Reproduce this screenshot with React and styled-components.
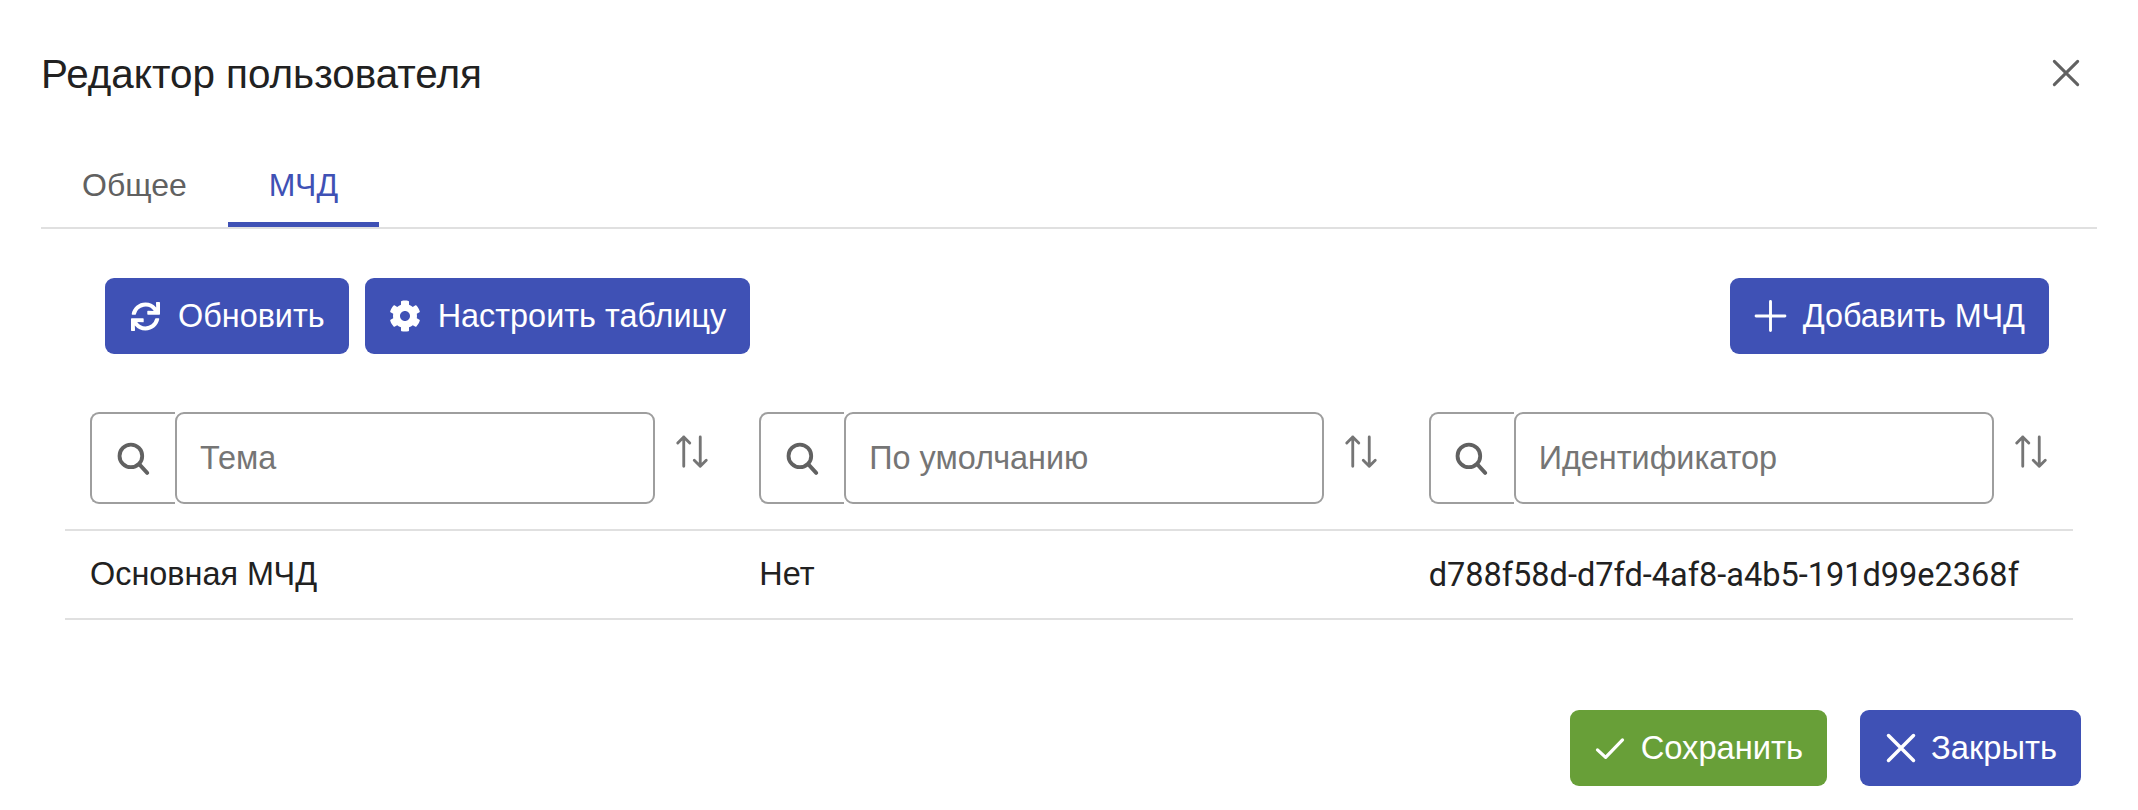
import React from "react";
import styled, { createGlobalStyle } from "styled-components";
import { FaCog, FaSync } from "react-icons/fa";

const Global = createGlobalStyle`
  html, body { margin: 0; padding: 0; background: #fff; }
  body { font-family: "Liberation Sans", Arial, sans-serif; color: #212121; }
  * { box-sizing: border-box; }
`;

const Dialog = styled.div`
  width: 2138px;
  height: 810px;
  padding: 0 41px;
  display: flex;
  flex-direction: column;
  overflow: hidden;
`;

const Header = styled.header`
  height: 148px;
  display: flex;
  align-items: center;
  justify-content: space-between;
  padding-right: 17px;
`;

const Title = styled.h1`
  margin: 0;
  font-size: 40.4px;
  font-weight: 400;
  line-height: 1;
  color: #212121;
`;

const CloseIcon = styled.button`
  width: 28px;
  height: 28px;
  padding: 0;
  border: 0;
  background: none;
  color: #616161;
  display: flex;
  margin-bottom: 2px;
`;

const TabBar = styled.nav`
  height: 81px;
  display: flex;
  border-bottom: 2px solid #e0e0e0;
`;

const Tab = styled.div`
  padding: 0 41px;
  display: flex;
  align-items: center;
  font-size: 32px;
  color: ${(p) => (p.$active ? "#3f51b5" : "#616161")};
  border-bottom: 5px solid ${(p) => (p.$active ? "#3f51b5" : "transparent")};
`;

const Toolbar = styled.div`
  margin-top: 49px;
  padding: 0 48px 0 64px;
  display: flex;
  justify-content: space-between;
`;

const ButtonGroup = styled.div`
  display: flex;
  gap: ${(p) => p.$gap || 16}px;
`;

const Button = styled.button`
  height: 76px;
  padding: 0 24px;
  display: flex;
  align-items: center;
  gap: ${(p) => (p.$wide ? 16 : 14)}px;
  border: 0;
  border-radius: 9px;
  background: ${(p) => (p.$green ? "#689f38" : "#3f51b5")};
  color: #fff;
  font-family: inherit;
  font-size: ${(p) => (p.$wide ? 32.4 : 32.7)}px;
  font-weight: 400;
  white-space: nowrap;
`;

const IconBox = styled.span`
  width: 33px;
  height: 33px;
  flex: none;
  display: flex;
  align-items: center;
  justify-content: center;
`;

const Table = styled.div`
  margin: 58px 24px 0;
  display: flex;
  flex-direction: column;
`;

const Row = styled.div`
  display: grid;
  grid-template-columns: repeat(3, 1fr);
  border-bottom: 2px solid #e0e0e0;
  height: ${(p) => p.$h}px;
`;

const HeadCell = styled.div`
  padding: 0 24px 0 25px;
  display: flex;
  align-items: flex-start;
`;

const Addon = styled.div`
  width: 85px;
  height: 92px;
  flex: none;
  border: 2px solid #9e9e9e;
  border-right: 0;
  border-radius: 9px 0 0 9px;
  color: #616161;
  display: flex;
  align-items: center;
  justify-content: center;
  padding-right: 2px;
`;

const SearchInput = styled.input`
  width: 480px;
  height: 92px;
  flex: none;
  border: 2px solid #9e9e9e;
  border-radius: 9px;
  padding: 0 23px;
  font-family: inherit;
  font-size: 32.4px;
  color: #212121;
  outline: none;
  background: #fff;
  &::placeholder { color: #757575; opacity: 1; }
`;

const SortIcon = styled.div`
  margin: 22px 0 0 19px;
  width: 36px;
  height: 36px;
  color: #757575;
  display: flex;
`;

const Cell = styled.div`
  padding: 0 24px 0 25px;
  display: flex;
  align-items: center;
  font-size: ${(p) => (p.$latin ? 32.5 : 32.4)}px;
  font-family: ${(p) => (p.$latin ? 'Roboto, "Liberation Sans", sans-serif' : "inherit")};
  color: #212121;
  white-space: nowrap;
`;

const Footer = styled.footer`
  margin-top: 90px;
  margin-right: 16px;
  display: flex;
  justify-content: flex-end;
`;

const Svg = ({ size, children, width = 2.6, box = 24 }) => (
  <svg width={size} height={size} viewBox={`0 0 ${box} ${box}`} fill="none" stroke="currentColor"
    strokeWidth={width} strokeLinecap="round" strokeLinejoin="round">{children}</svg>
);

const TimesGlyph = ({ size, width }) => (
  <Svg size={size} width={width}><path d="M2 2 22 22M22 2 2 22" /></Svg>
);
const PlusGlyph = () => (
  <Svg size={34} width={2.1}><path d="M12 1.5v21M1.5 12h21" /></Svg>
);
const CheckGlyph = () => (
  <Svg size={30} width={2.6}><path d="M2 13.5 8.5 19.5 22 5.5" /></Svg>
);
const SearchGlyph = () => (
  <Svg size={34} width={2.7}><circle cx="10.5" cy="10.5" r="8" /><path d="M16.5 16.5 22 22.5" /></Svg>
);
const SortGlyph = () => (
  <Svg size={36} width={1.9}>
    <path d="M6.5 21.5V2M2.5 6 6.5 2l4 4M17.5 2v19.5M13.5 17.5l4 4 4-4" />
  </Svg>
);

const columns = ["Тема", "По умолчанию", "Идентификатор"];

export default function App() {
  return (
    <Dialog>
      <Global />
      <Header>
        <Title>Редактор пользователя</Title>
        <CloseIcon aria-label="close"><TimesGlyph size={28} width={2.6} /></CloseIcon>
      </Header>
      <TabBar>
        <Tab>Общее</Tab>
        <Tab $active>МЧД</Tab>
      </TabBar>
      <Toolbar>
        <ButtonGroup>
          <Button $wide><IconBox><FaSync size={29} /></IconBox>Обновить</Button>
          <Button $wide><IconBox><FaCog size={32} /></IconBox>Настроить таблицу</Button>
        </ButtonGroup>
        <Button $wide><IconBox><PlusGlyph /></IconBox>Добавить МЧД</Button>
      </Toolbar>
      <Table>
        <Row $h={119}>
          {columns.map((c) => (
            <HeadCell key={c}>
              <Addon><SearchGlyph /></Addon>
              <SearchInput placeholder={c} readOnly />
              <SortIcon><SortGlyph /></SortIcon>
            </HeadCell>
          ))}
        </Row>
        <Row $h={89}>
          <Cell>Основная МЧД</Cell>
          <Cell>Нет</Cell>
          <Cell $latin>d788f58d-d7fd-4af8-a4b5-191d99e2368f</Cell>
        </Row>
      </Table>
      <Footer>
        <ButtonGroup $gap={33}>
          <Button $green><IconBox><CheckGlyph /></IconBox>Сохранить</Button>
          <Button><IconBox><TimesGlyph size={30} width={2.8} /></IconBox>Закрыть</Button>
        </ButtonGroup>
      </Footer>
    </Dialog>
  );
}
